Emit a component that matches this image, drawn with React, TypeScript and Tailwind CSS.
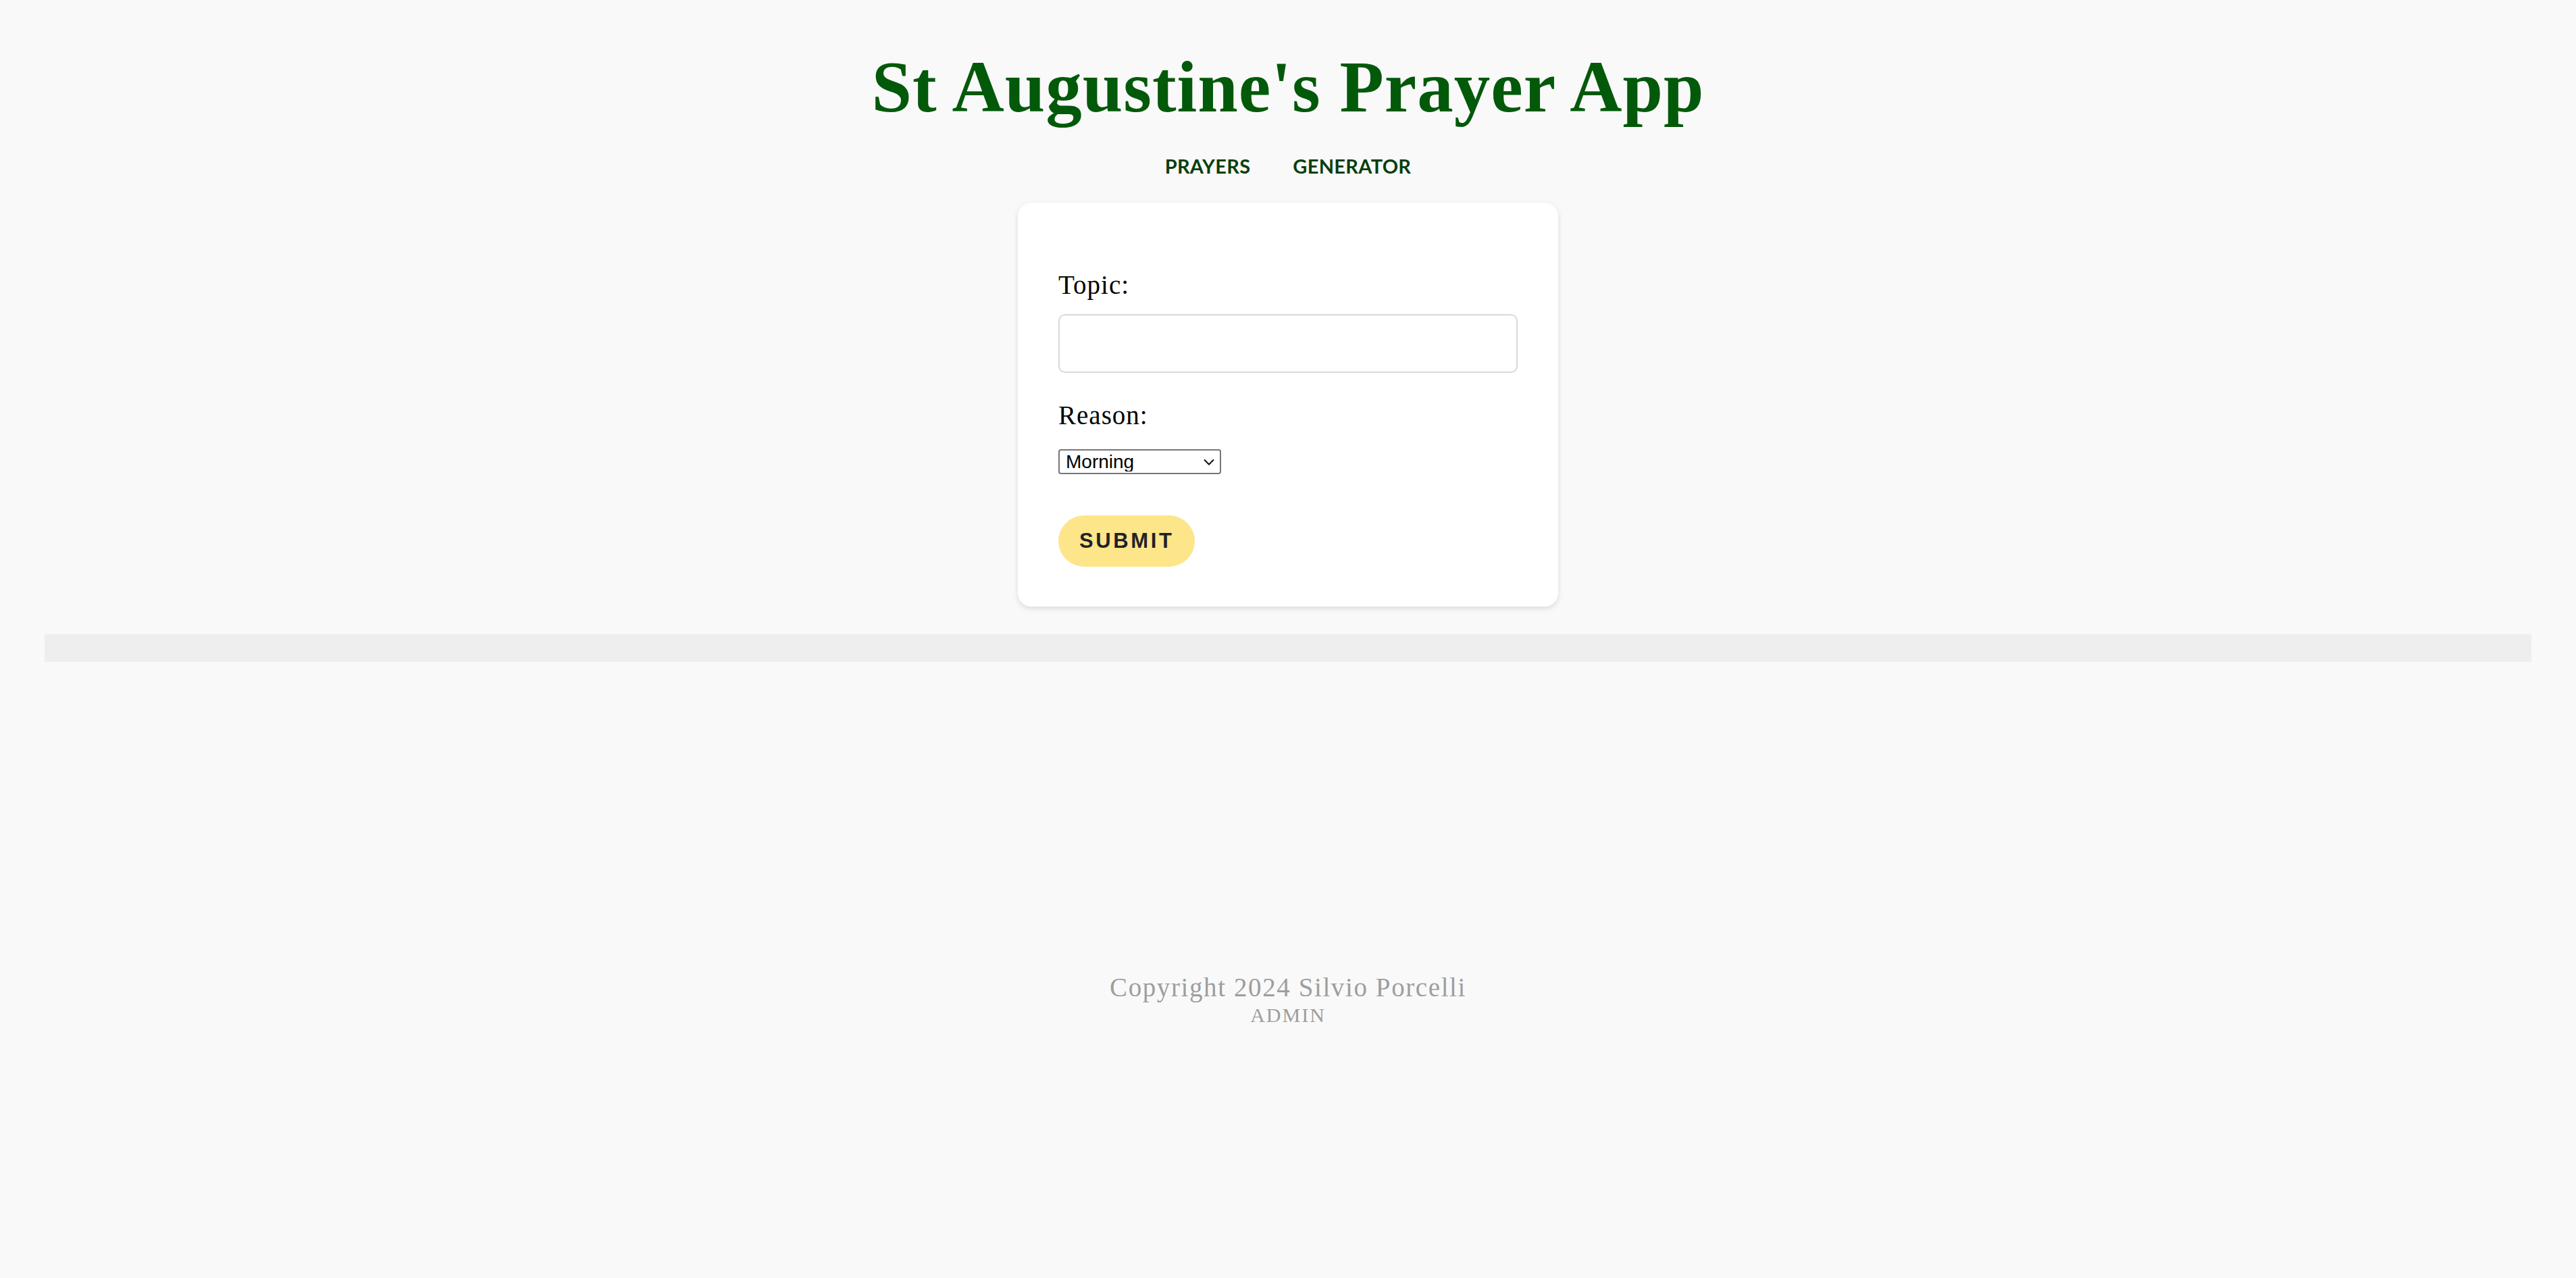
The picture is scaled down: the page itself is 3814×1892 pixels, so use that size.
import { useState } from "react"

const serif = "font-['Liberation_Serif','Times_New_Roman',serif]"

function ChevronDown() {
  return (
    <svg width="16" height="10" viewBox="0 0 16 10" fill="none" className="pointer-events-none absolute right-[10px] top-[14px]">
      <path d="M1 1.5L8 8.5L15 1.5" stroke="#111" strokeWidth="2" />
    </svg>
  )
}

export default function App() {
  const [topic, setTopic] = useState("")
  const [reason, setReason] = useState("Morning")

  return (
    <div className="min-h-screen bg-[#f9f9f9] pt-[76px]">
      <header className="flex flex-col items-center">
        <h1 className={`${serif} text-[107px] leading-none font-bold tracking-[1px] text-[#03590a]`}>St Augustine's Prayer App</h1>
        <nav className="mt-[48px] flex items-center gap-[63px] font-['Lato',sans-serif] text-[29px] leading-none font-bold tracking-[0.3px] text-[#093f0d]">
          <a href="#">PRAYERS</a>
          <a href="#">GENERATOR</a>
        </nav>
      </header>

      <main className="mt-[40px] flex justify-center">
        <form
          className="w-[800px] rounded-[20px] bg-white px-[60px] pt-[102px] pb-[59px] shadow-[0_3px_8px_rgba(0,0,0,0.12)]"
          onSubmit={(e) => e.preventDefault()}
        >
          <label className={`${serif} block text-[39px] leading-none tracking-[1px] text-black`}>Topic:</label>
          <input
            value={topic}
            onChange={(e) => setTopic(e.target.value)}
            className="mt-[24px] block h-[87px] w-full rounded-[10px] border-2 border-[#d9d9d9] bg-white px-4 text-[32px] outline-none"
          />

          <label className={`${serif} mt-[43px] block text-[39px] leading-none tracking-[1px] text-black`}>Reason:</label>
          <div className="relative mt-[31px] w-[241px]">
            <select
              value={reason}
              onChange={(e) => setReason(e.target.value)}
              className="block h-[37px] w-full appearance-none rounded-[4px] border-2 border-[#767676] bg-white pl-[9px] font-['Liberation_Sans',Arial,sans-serif] text-[28px] leading-none text-black"
            >
              <option>Morning</option>
              <option>Evening</option>
              <option>Thanksgiving</option>
              <option>Healing</option>
            </select>
            <ChevronDown />
          </div>

          <button
            type="submit"
            className="mt-[61px] h-[76px] rounded-full bg-[#fde68a] px-[31px] font-['Liberation_Sans',Arial,sans-serif] text-[31px] font-bold tracking-[3.6px] text-[#1f2328]"
          >
            SUBMIT
          </button>
        </form>
      </main>

      <div className="mx-[66px] mt-[41px] h-[41px] bg-[#eeeeee]" />

      <footer className={`${serif} mt-[462px] flex flex-col items-center text-[#9e9e9e]`}>
        <p className="text-[39px] leading-none tracking-[1.6px]">Copyright 2024 Silvio Porcelli</p>
        <a href="#" className="mt-[7px] text-[30px] leading-none tracking-[2px]">ADMIN</a>
      </footer>
    </div>
  )
}
